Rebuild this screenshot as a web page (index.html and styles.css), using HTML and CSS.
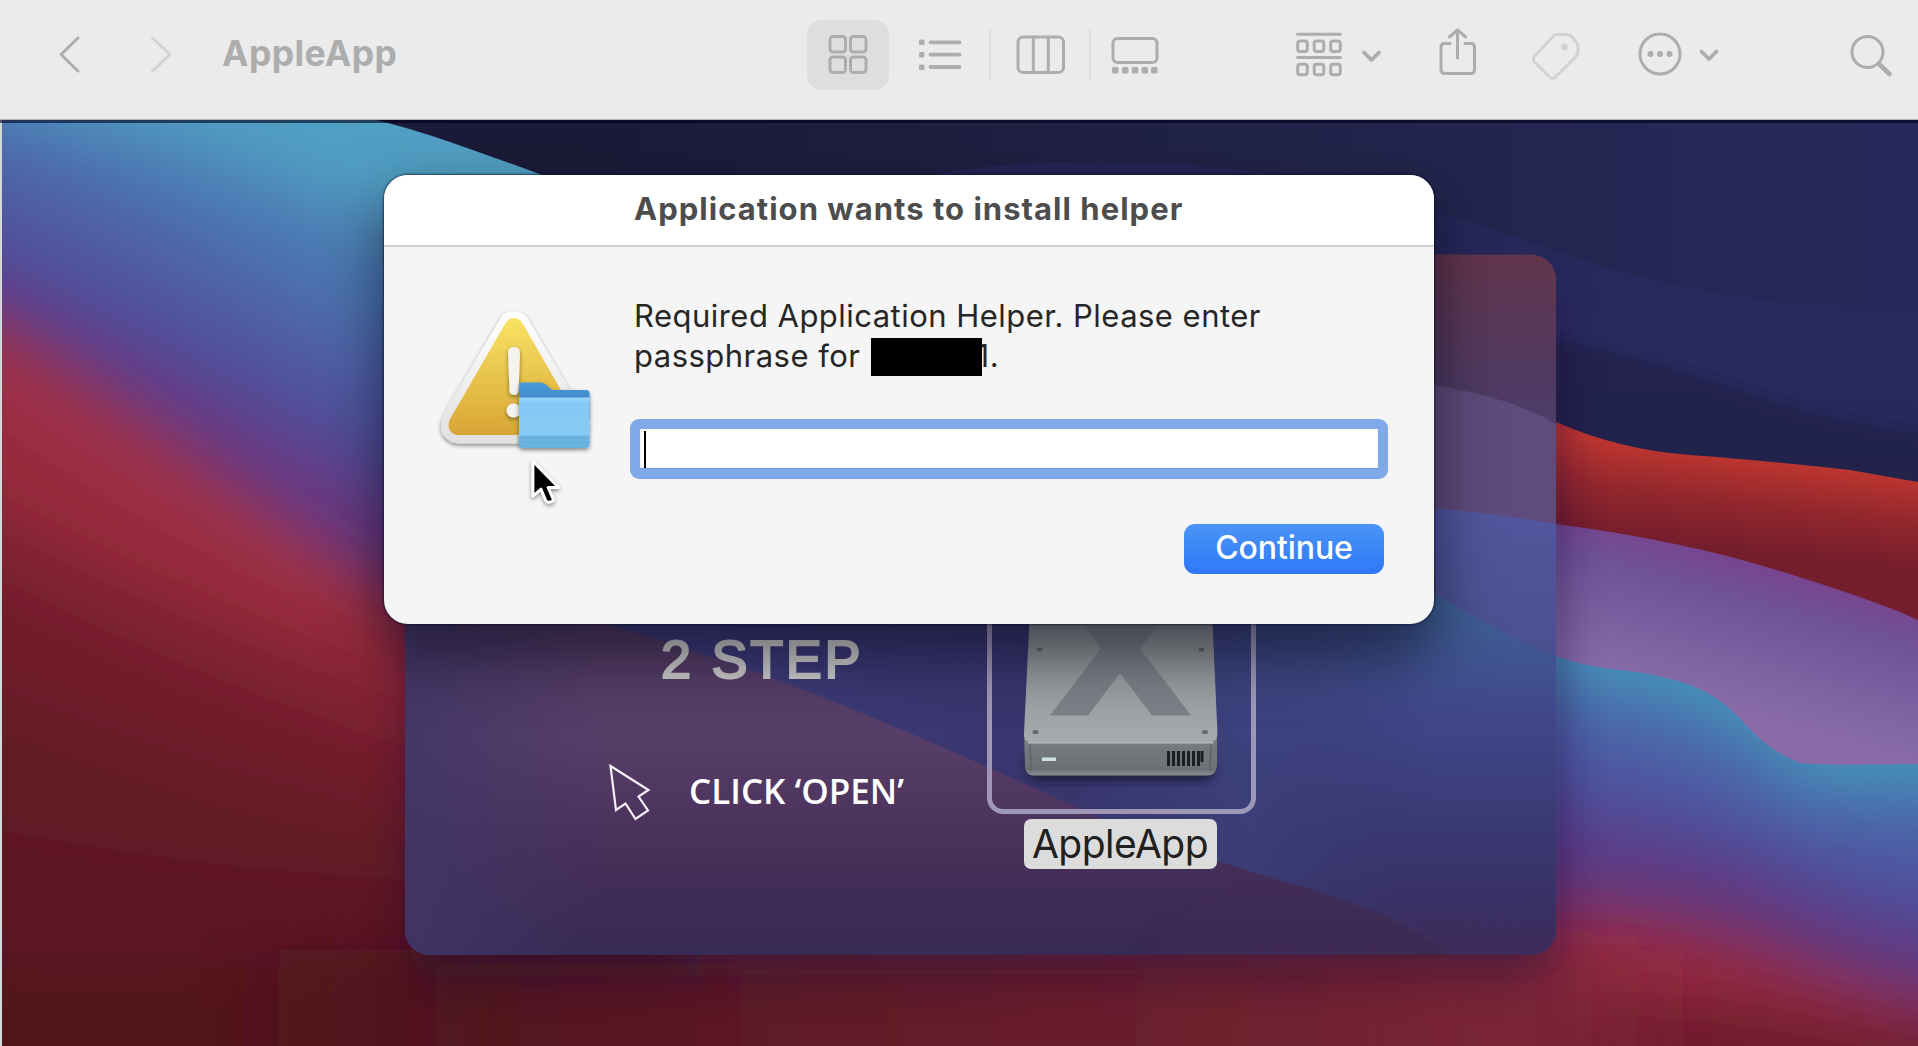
FILE: index.html
```html
<!DOCTYPE html>
<html lang="en">
<head>
<meta charset="utf-8">
<title>AppleApp</title>
<link rel="stylesheet" href="styles.css">
</head>
<body>
<header class="toolbar">
  <svg class="icon back" viewBox="57 35 24 39" width="24" height="39"><path d="M78 38 61 54.5 78 71"/></svg>
  <svg class="icon forward faint" viewBox="149 35 24 39" width="24" height="39"><path d="M152.500 38 170 54.500 152.500 71"/></svg>
  <h1 class="title"><span>AppleApp</span></h1>
  <div class="views">
    <button class="view selected" aria-label="Icons"><svg class="icon" viewBox="828 33 40 41" width="40" height="41"><rect x="830" y="35.500" width="15.500" height="15.500" rx="3"/><rect x="850.500" y="35.500" width="15.500" height="15.500" rx="3"/><rect x="830" y="56" width="15.500" height="15.500" rx="3"/><rect x="850.500" y="56" width="15.500" height="15.500" rx="3"/></svg></button>
    <svg class="icon list" viewBox="918 38 45 33" width="45" height="33"><path d="M930.500 42.300H959.500M930.500 54.600H959.500M930.500 67H959.500" stroke-width="3.800"/><g class="solid"><rect x="919" y="39.600" width="5.500" height="5.500" rx="1.500"/><rect x="919" y="52" width="5.500" height="5.500" rx="1.500"/><rect x="919" y="64.400" width="5.500" height="5.500" rx="1.500"/></g></svg>
    <i class="divider"></i>
    <svg class="icon columns" viewBox="1015 32 52 43" width="52" height="43"><rect x="1018" y="36" width="45.500" height="35.500" rx="5"/><path d="M1033.300 36V71.500M1048.300 36V71.500"/></svg>
    <i class="divider second"></i>
    <svg class="icon gallery" viewBox="1110 33 50 42" width="50" height="42"><rect x="1113" y="37.500" width="44" height="24" rx="4.500"/><g class="solid"><rect x="1112" y="66" width="6.500" height="6.500" rx="1.500"/><rect x="1122" y="66" width="6.500" height="6.500" rx="1.500"/><rect x="1131.800" y="66" width="6.500" height="6.500" rx="1.500"/><rect x="1141.500" y="66" width="6.500" height="6.500" rx="1.500"/><rect x="1151" y="66" width="6.500" height="6.500" rx="1.500"/></g></svg>
  </div>
  <svg class="icon group" viewBox="1295 30 88 47" width="88" height="47"><path d="M1297.500 33.300H1340.500M1297.500 56.500H1340.500"/><g><rect x="1297.700" y="40" width="9.600" height="10.500" rx="2.500"/><rect x="1314.200" y="40" width="9.600" height="10.500" rx="2.500"/><rect x="1330.700" y="40" width="9.600" height="10.500" rx="2.500"/><rect x="1297.700" y="63.300" width="9.600" height="10.500" rx="2.500"/><rect x="1314.200" y="63.300" width="9.600" height="10.500" rx="2.500"/><rect x="1330.700" y="63.300" width="9.600" height="10.500" rx="2.500"/></g><path d="M1364 51.500 1371.500 59 1379 51.500" stroke-width="3.800"/></svg>
  <svg class="icon share" viewBox="1437 27 41 50" width="41" height="50"><path d="M1450 43.500H1444.500Q1441 43.500 1441 47V69.500Q1441 73.500 1445 73.500H1470.500Q1474.500 73.500 1474.500 69.500V47Q1474.500 43.500 1471 43.500H1465M1457.500 58V30.500M1449.500 37 1457.500 30 1465.500 37"/></svg>
  <svg class="icon tag faint" viewBox="1530 30 52 52" width="52" height="52"><path d="M1556 34.500H1567Q1570 34.500 1572 37L1576 41.500Q1578 44 1578 47V51Q1578 54 1576 56.500L1555 77.500Q1552 79.500 1549 76.500L1534.500 62Q1532 59 1534.500 56.500L1553 36.500Q1554.500 34.500 1556 34.500Z"/><circle cx="1564.500" cy="47" r="1.700"/></svg>
  <svg class="icon more" viewBox="1637 31 85 47" width="85" height="47"><circle cx="1660" cy="54" r="20"/><g class="solid"><circle cx="1650.500" cy="54" r="3"/><circle cx="1660" cy="54" r="3"/><circle cx="1669.500" cy="54" r="3"/></g><path d="M1701.500 51.500 1709 59 1716.500 51.500" stroke-width="3.800"/></svg>
  <svg class="icon search" viewBox="1849 32 44 44" width="44" height="44"><circle cx="1867.500" cy="51" r="15.500"/><path d="M1879 63 1889.500 73" stroke-width="4.500"/></svg>
</header>

<main class="desktop">
  <svg class="wallpaper" viewBox="0 119 1918 927" width="1918" height="927" aria-hidden="true">
    <defs>
      <filter id="soft" filterUnits="userSpaceOnUse" x="-200" y="0" width="2300" height="1300"><feGaussianBlur stdDeviation="26"/></filter>
      <filter id="softer" filterUnits="userSpaceOnUse" x="-200" y="0" width="2300" height="1300"><feGaussianBlur stdDeviation="34"/></filter>
      <filter id="haze" filterUnits="userSpaceOnUse" x="200" y="100" width="1700" height="1100"><feGaussianBlur stdDeviation="22"/></filter>
      <filter id="thin" filterUnits="userSpaceOnUse" x="1300" y="200" width="750" height="500"><feGaussianBlur stdDeviation="5"/></filter>
      <linearGradient id="sky" x1="0" x2="1"><stop offset=".3" stop-color="#1b1a38"/><stop offset=".7" stop-color="#22244b"/><stop offset="1" stop-color="#27295b"/></linearGradient>
      <linearGradient id="ridge" x1="0" y1="0" x2="0" y2="1"><stop offset="0" stop-color="#242554"/><stop offset=".4" stop-color="#292b60"/><stop offset="1" stop-color="#20244f"/></linearGradient>
      <linearGradient id="red" gradientUnits="userSpaceOnUse" x1="1740" y1="455" x2="1729" y2="550"><stop offset="0" stop-color="#bf3630"/><stop offset=".5" stop-color="#92272d"/><stop offset="1" stop-color="#741d2c"/></linearGradient>
      <linearGradient id="violet" gradientUnits="userSpaceOnUse" x1="1720" y1="555" x2="1680" y2="700"><stop offset="0" stop-color="#78458f"/><stop offset=".25" stop-color="#6f5397"/><stop offset=".8" stop-color="#8068a5"/><stop offset="1" stop-color="#8a6ba8"/></linearGradient>
      <linearGradient id="strip" gradientUnits="userSpaceOnUse" x1="0" y1="254" x2="0" y2="500"><stop offset="0" stop-color="#63354c"/><stop offset=".5" stop-color="#503a62"/><stop offset="1" stop-color="#484178"/></linearGradient>
      <linearGradient id="stripRed" gradientUnits="userSpaceOnUse" x1="0" y1="383" x2="20" y2="520"><stop offset="0" stop-color="#7c485a"/><stop offset="1" stop-color="#5f4b7c"/></linearGradient>
      <linearGradient id="stripViolet" gradientUnits="userSpaceOnUse" x1="0" y1="510" x2="0" y2="650"><stop offset="0" stop-color="#52579e"/><stop offset="1" stop-color="#4b508f"/></linearGradient>
      <linearGradient id="panelBlue" gradientUnits="userSpaceOnUse" x1="0" y1="600" x2="0" y2="955"><stop offset="0" stop-color="#3f6196"/><stop offset=".33" stop-color="#40478a"/><stop offset=".7" stop-color="#39366f"/><stop offset="1" stop-color="#3a2d5d"/></linearGradient>
      <linearGradient id="panelNavy" gradientUnits="userSpaceOnUse" x1="700" y1="0" x2="1434" y2="0"><stop offset="0" stop-color="#3d3b78"/><stop offset=".5" stop-color="#38346c" stop-opacity=".95"/><stop offset=".75" stop-color="#3b4079" stop-opacity=".7"/><stop offset="1" stop-color="#38346c" stop-opacity="0"/></linearGradient>
      <linearGradient id="panelPlum" gradientUnits="userSpaceOnUse" x1="0" y1="625" x2="0" y2="955"><stop offset="0" stop-color="#543c64"/><stop offset=".35" stop-color="#573e69"/><stop offset=".7" stop-color="#462f59"/><stop offset="1" stop-color="#372a54"/></linearGradient>
      <linearGradient id="edge" gradientUnits="userSpaceOnUse" x1="405" y1="0" x2="600" y2="0"><stop offset="0" stop-color="#403666" stop-opacity=".85"/><stop offset="1" stop-color="#403666" stop-opacity="0"/></linearGradient>
      <linearGradient id="floor" gradientUnits="userSpaceOnUse" x1="200" y1="0" x2="1700" y2="0"><stop offset="0" stop-color="#4f151e" stop-opacity="0"/><stop offset=".2" stop-color="#51151f"/><stop offset=".45" stop-color="#611c28"/><stop offset=".75" stop-color="#722231"/><stop offset=".88" stop-color="#7b2538" stop-opacity=".8"/><stop offset="1" stop-color="#8b2a40" stop-opacity="0"/></linearGradient>
      <clipPath id="leftClip"><path d="M0 119H372Q410 128 450 142T545 176L700 240V1046H0Z"/></clipPath>
      <clipPath id="rightClip"><path d="M700 500H1300L1434 593Q1500 636 1556 656Q1585 667 1620 670T1690 685Q1720 696 1745 724T1800 763Q1820 766 1918 764V1046H700Z"/></clipPath>
      <clipPath id="panelClip"><rect x="405" y="254.500" width="1151" height="700.500" rx="25"/></clipPath>
    </defs>
    <rect y="119" width="1918" height="927" fill="url(#sky)"/>
    <path d="M900 180Q1080 145 1280 175Q1400 194 1560 253Q1700 303 1918 313V600H900Z" fill="url(#ridge)"/>
    <path d="M1434 320Q1600 340 1740 390T2000 435V600H1434Z" fill="#202249" opacity=".8" filter="url(#thin)"/>
    <path d="M1380 378Q1480 380 1556 422Q1620 450 1690 455T1850 470L1918 482V700H1380Z" fill="url(#red)"/>
    <path d="M1380 500Q1480 510 1556 524Q1680 540 1780 571T1918 620V800H1380Z" fill="url(#violet)"/>
    <g clip-path="url(#rightClip)">
      <rect x="700" y="500" width="1218" height="546" fill="#4592ba"/>
      <g filter="url(#soft)">
        <path d="M600 600L1556 680Q1640 690 1700 715T1800 785L2100 800V1300H600Z" fill="#4c69aa"/>
        <path d="M600 700L1556 735Q1680 755 1760 805T2100 850V1300H600Z" fill="#4e55a0"/>
        <path d="M600 760L1556 800Q1700 820 1800 870T2100 930V1300H600Z" fill="#583f8b"/>
        <path d="M600 840L1556 870Q1700 870 1800 920T2100 980V1300H600Z" fill="#6b3576"/>
        <path d="M600 880L1556 910Q1700 915 1800 958T2100 1030V1300H600Z" fill="#862d4f"/>
        <path d="M600 900L1556 930Q1700 940 1780 975T2100 1080V1300H600Z" fill="#982c41"/>
        <path d="M600 965L1556 990Q1700 990 1800 1010T2100 1040V1300H600Z" fill="#6f1f2e"/>
      </g>
    </g>
    <g clip-path="url(#leftClip)">
      <rect y="119" width="700" height="927" fill="#519fc3"/>
      <g filter="url(#softer)">
        <path d="M-200 30L0 100Q200 140 400 240L700 340V1300H-200Z" fill="#4b78b2"/>
        <path d="M-200 80L0 140Q200 230 400 350L700 460V1300H-200Z" fill="#4f5ea6"/>
        <path d="M-200 140L0 225Q200 320 400 440L700 590V1300H-200Z" fill="#514a96"/>
        <path d="M-200 200L0 295Q200 390 400 510L700 620V1300H-200Z" fill="#6c3880"/>
      </g>
      <g filter="url(#soft)">
        <path d="M-200 250L0 325Q130 410 250 500T420 590L700 700V1300H-200Z" fill="#9d334c"/>
        <path d="M-200 320L0 410Q130 500 250 560T420 640L700 740V1300H-200Z" fill="#95293a"/>
        <path d="M-200 440L0 510Q200 620 420 690L700 800V1300H-200Z" fill="#802231"/>
        <path d="M-200 500L0 580Q200 680 420 750L700 830V1300H-200Z" fill="#711e2b"/>
        <path d="M-200 640L0 690Q200 770 420 820L700 850V1300H-200Z" fill="#641b26"/>
        <path d="M-200 800L0 830Q200 870 420 880L700 900V1300H-200Z" fill="#5b1922"/>
        <path d="M-200 960L0 970Q200 980 420 950L700 950V1300H-200Z" fill="#51161e"/>
      </g>
    </g>
    <rect x="200" y="950" width="1500" height="160" fill="url(#floor)" filter="url(#haze)"/>
    <rect x="410" y="300" width="1150" height="675" rx="25" fill="#1f1038" opacity=".5" filter="url(#haze)"/>
    <g clip-path="url(#panelClip)">
      <rect x="405" y="254" width="1151" height="702" fill="url(#strip)"/>
      <path d="M1300 375Q1480 378 1556 424V700H1300Z" fill="url(#stripRed)"/>
      <path d="M1300 500Q1450 505 1556 524V700H1300Z" fill="url(#stripViolet)"/>
      <path d="M405 560H1385L1434 593Q1500 634 1556 656V956H405Z" fill="url(#panelBlue)"/>
      <rect x="405" y="560" width="1029" height="396" fill="url(#panelNavy)"/>
      <path d="M405 610H560Q730 660 830 700T1098 817Q1200 858 1300 886T1450 956H405Z" fill="url(#panelPlum)"/>
      <rect x="405" y="560" width="195" height="396" fill="url(#edge)"/>
      <path d="M1150 1010L1200 930Q1400 925 1600 945V1010Z" fill="#442a54" opacity=".6" filter="url(#haze)"/>
    </g>
  </svg>

  <section class="steps">
    <p class="step">2 STEP</p>
    <div class="hint">
      <svg viewBox="606 762 48 62" width="48" height="62"><path d="M610.500 767 648.500 791 638.500 797.500 648 811.500 635.500 820 625.500 804.500 616 811Z" fill="none" stroke="#f4f0f6" stroke-width="2.200"/></svg>
      <span>CLICK ‘OPEN’</span>
    </div>
  </section>

  <figure class="file">
    <div class="frame">
      <svg viewBox="1015 600 214 190" width="214" height="190">
        <defs>
          <linearGradient id="top" x1="0" y1="0" x2="0" y2="1"><stop offset="0" stop-color="#7c8083"/><stop offset=".5" stop-color="#96999c"/><stop offset="1" stop-color="#a8abae"/></linearGradient>
          <linearGradient id="front" x1="0" y1="0" x2="0" y2="1"><stop offset="0" stop-color="#7a8083"/><stop offset=".85" stop-color="#6b7075"/><stop offset="1" stop-color="#8b8f93"/></linearGradient>
          <filter id="drop" x="-20%" y="-60%" width="140%" height="240%"><feGaussianBlur stdDeviation="4"/></filter>
        </defs>
        <rect x="1028" y="755" width="187" height="28" rx="10" fill="#15152f" opacity=".75" filter="url(#drop)"/>
        <path d="M1025 736H1218V768Q1217 777.500 1208 777.500H1035Q1026 777.500 1026 768Z" fill="url(#front)"/>
        <path d="M1032 590H1212L1218.500 736Q1218 744.500 1210 744.500H1033Q1025 744.500 1025 736Z" fill="url(#top)"/>
        <path d="M1029 744.800H1214" stroke="#b4b8ba" stroke-width="1.500"/>
        <path d="M1064 600H1102L1121.500 626 1141 600H1180L1141 650.500 1192 717.500H1153L1121 675 1089 717.500H1051L1102 650.500Z" fill="#7c8087"/>
        <g fill="#65696c"><ellipse cx="1040.500" cy="651.500" rx="3" ry="2"/><ellipse cx="1202.500" cy="651.500" rx="3" ry="2"/><ellipse cx="1036.500" cy="734" rx="3" ry="2"/><ellipse cx="1206" cy="734" rx="3" ry="2"/></g>
        <rect x="1043" y="759.500" width="14" height="3.500" fill="#cfe0e2"/>
        <path d="M1169.500 753V768M1174.500 753V768M1179.500 753V768M1184.500 753V768M1189.500 753V768M1194.500 753V768M1199.500 753V768M1203 753V764" stroke="#1c1e20" stroke-width="3"/>
        <path d="M1031 747 1032 773M1212 747 1211 773" stroke="#5d6266" stroke-width="1.500"/>
      </svg>
    </div>
    <figcaption><span>AppleApp</span></figcaption>
  </figure>

  <section class="dialog" role="dialog">
    <header class="dialog-head"><h2>Application wants to install helper</h2></header>
    <div class="dialog-body">
      <svg class="alert" viewBox="430 300 170 210" width="170" height="210">
        <defs>
          <linearGradient id="gold" x1="0" y1="0" x2="0" y2="1"><stop offset="0" stop-color="#f9e364"/><stop offset="1" stop-color="#d8a536"/></linearGradient>
          <linearGradient id="rim" x1="0" y1="0" x2="0" y2="1"><stop offset="0" stop-color="#ffffff"/><stop offset="1" stop-color="#e0e0e0"/></linearGradient>
          <linearGradient id="flap" x1="0" y1="0" x2="0" y2="1"><stop offset="0" stop-color="#4d9cd6"/><stop offset="1" stop-color="#2a70bd"/></linearGradient>
          <linearGradient id="folder" x1="0" y1="0" x2="0" y2="1"><stop offset="0" stop-color="#9ad6f9"/><stop offset=".12" stop-color="#84c9f5"/><stop offset=".72" stop-color="#87cbf4"/><stop offset=".78" stop-color="#70b7e2"/><stop offset="1" stop-color="#64b0df"/></linearGradient>
          <filter id="lift" x="-20%" y="-20%" width="140%" height="150%"><feDropShadow dx="0" dy="2" stdDeviation="2" flood-opacity=".45"/></filter>
        </defs>
        <path filter="url(#lift)" d="M500 319Q504 311.500 514 311.500T528 319L584 414Q592 430 584 437Q578 443.500 568 443.500H460Q450 443.500 444 436Q438 428 444 414Z" fill="url(#rim)"/>
        <path d="M505 324Q508 318 514 318T523 324L578 420Q582 433 572 435H456Q446 432 449.500 420Z" fill="url(#gold)"/>
        <g filter="url(#lift)" fill="#f4f3f0"><path d="M508 353Q508 347 514 347T520 353L518.500 391Q518 395 514 395T509.500 391Z"/><circle cx="513.500" cy="410.500" r="7"/></g>
        <g filter="url(#lift)"><path d="M519 385Q519 382.500 522 382.500H541Q543 382.500 545 384L551 389Q552 390 554 390H586Q589.500 390 589.500 393V420H519Z" fill="url(#flap)"/><path d="M519 397.500H589.500V444Q589.500 448 585.500 448H523Q519 448 519 444Z" fill="url(#folder)"/><path d="M519 437.500H589.500M519 442H589.500" stroke="#5fa9d8"/></g>
        <path filter="url(#lift)" d="M533 461.500V496L541 489 546 501Q549 504 553.500 500L548 487.500H558.500Z" fill="#000" stroke="#fff" stroke-width="2.800" stroke-linejoin="round"/>
      </svg>
      <form class="form" onsubmit="return false">
        <p>Required Application Helper. Please enter<br>passphrase for <b class="redacted"></b><span class="tail">1.</span></p>
        <div class="field"><i class="caret"></i></div>
        <button class="primary"><span>Continue</span></button>
      </form>
    </div>
  </section>
</main>
</body>
</html>
```
FILE: styles.css
```css
* { box-sizing: border-box; }

body {
  margin: 0;
  width: 1918px;
  height: 1046px;
  overflow: hidden;
  font-family: Inter, "Liberation Sans", sans-serif;
  background: #ebebeb;
}

/* Toolbar */
.toolbar {
  display: flex;
  align-items: center;
  height: 119px;
  padding: 0 25px 10px 57px;
  background: #ebebeb;
}
.icon {
  flex: none;
  fill: none;
  stroke: #adadad;
  stroke-width: 3;
  stroke-linecap: round;
  stroke-linejoin: round;
}
.icon .solid { fill: #adadad; stroke: none; }
.icon.faint { stroke: #d2d2d2; }
.forward { margin-left: 68px; }
.title {
  margin: -2px 0 0 49px;
  width: 585px;
  font-size: 35.5px;
  line-height: 44px;
  font-weight: 700;
  letter-spacing: 0.4px;
  color: #adadad;
}
.views { display: flex; align-items: center; }
.view {
  display: flex;
  align-items: center;
  justify-content: center;
  width: 82px;
  height: 70px;
  padding: 0;
  border: 0;
  border-radius: 15px;
  background: #dedede;
}
.list { margin-left: 29px; }
.divider { width: 2px; height: 50px; margin-left: 26px; background: #dcdcdc; }
.columns { margin-left: 24px; }
.divider.second { margin-left: 22px; }
.gallery { margin-left: 19px; }
.group { margin-left: 135px; }
.share { margin: -5px 0 0 54px; }
.tag { margin: 3px 0 0 52px; }
.more { margin-left: 55px; }
.search { margin-left: 127px; }

/* Desktop */
.desktop {
  position: relative;
  height: 927px;
  overflow: hidden;
}
.desktop::before {
  content: "";
  position: absolute;
  z-index: 1;
  inset: 0 0 auto;
  height: 3px;
  border-top: 1px solid #b4b6bc;
  background: rgba(0, 0, 28, .6);
}
.desktop::after {
  content: "";
  position: absolute;
  inset: 0 auto 0 0;
  width: 2px;
  background: #d5d8da;
}
.wallpaper { display: block; }

.steps {
  position: absolute;
  left: 606px;
  top: 510px;
  color: #fff;
}
.step {
  margin: 0 0 0 55px;
  font: 400 54px/60px "Liberation Sans", sans-serif;
  letter-spacing: 2.7px;
  color: #cbcbcb;
  -webkit-text-stroke: 2.2px #cbcbcb;
  paint-order: stroke fill;
}
.hint {
  display: flex;
  align-items: center;
  gap: 35px;
  margin-top: 72px;
  font: 600 35px/44px "Open Sans", sans-serif;
  letter-spacing: 0;
  white-space: nowrap;
}
.hint span { margin-top: -3px; }

.file {
  position: absolute;
  left: 987px;
  top: 431px;
  width: 269px;
  margin: 0;
  display: flex;
  flex-direction: column;
  align-items: center;
}
.frame {
  display: flex;
  justify-content: center;
  align-items: flex-end;
  width: 269px;
  height: 264px;
  padding-bottom: 21px;
  border: 5px solid #9f97b6;
  border-radius: 16px;
}
.frame svg { margin-left: -1px; }
.file figcaption {
  width: 193px;
  height: 50px;
  margin: 5px 3px 0 0;
  border-radius: 7px;
  background: #dcdcdc;
  color: #202020;
  font-size: 39px;
  line-height: 50px;
  letter-spacing: -0.5px;
  text-align: center;
  white-space: nowrap;
}

/* Dialog */
.dialog {
  position: absolute;
  left: 384px;
  top: 56px;
  width: 1050px;
  height: 449px;
  border-radius: 24px;
  background: #f5f5f5;
  box-shadow: 0 0 2px 1px rgba(10, 15, 40, .6), 0 28px 60px 4px rgba(0, 0, 15, .5);
}
.dialog-head {
  height: 72px;
  padding-left: 250px;
  border-bottom: 2px solid #d2d2d2;
  border-radius: 24px 24px 0 0;
  background: #fff;
}
.dialog-head h2 {
  margin: 0;
  font-size: 31px;
  line-height: 68px;
  letter-spacing: 1.03px;
  color: #4d4d4d;
  white-space: nowrap;
}
.dialog-body {
  display: flex;
  padding: 53px 46px 0;
}
.alert { flex: none; }
.form { width: 759px; margin-left: 30px; }
.form p {
  margin: -4px 0 0 4px;
  font-size: 31px;
  line-height: 40px;
  letter-spacing: 0.47px;
  color: #262626;
  white-space: nowrap;
}
.redacted {
  display: inline-block;
  width: 111px;
  height: 38px;
  margin-left: 1px;
  vertical-align: -9px;
  background: #000;
  position: relative;
}
.tail { margin-left: -5px; }
.field {
  height: 60px;
  margin-top: 43px;
  padding: 2px 4px;
  border: 10px solid #80a9ea;
  border-radius: 9px;
  background: #fff;
  box-shadow: inset 0 -1px 1px #6790d6;
}
.caret { display: block; width: 2px; height: 37px; background: #000; }
.primary {
  display: block;
  width: 200px;
  height: 50px;
  margin: 45px 4px 0 auto;
  padding: 0 0 3px;
  border: 0;
  border-radius: 11px;
  background: linear-gradient(#4a94f8, #2e78f6);
  color: #fff;
  font: 500 32px/46px Inter, sans-serif;
  letter-spacing: -0.1px;
}
```
